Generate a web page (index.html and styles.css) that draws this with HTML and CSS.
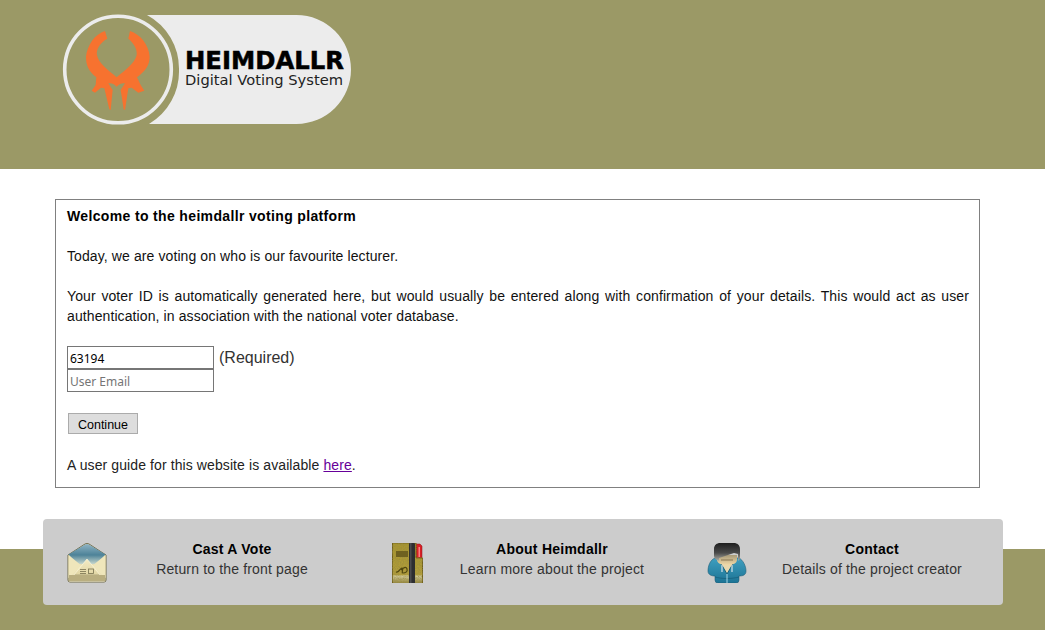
FILE: index.html
```html
<!DOCTYPE html>
<html lang="en">
<head>
<meta charset="utf-8">
<title>Heimdallr Digital Voting System</title>
<link rel="stylesheet" href="styles.css">
</head>
<body>
<header class="masthead">
  <svg class="logo" viewBox="62 14 292 112" width="292" height="112" role="img" aria-label="Heimdallr logo">
    <path d="M147 15H296.500A54.500 54.500 0 0 1 296.500 124H149A61 61 0 0 0 179 69.500A61 61 0 0 0 147 15Z" fill="#ececec"/>
    <circle cx="118" cy="69.500" r="53.300" fill="none" stroke="#ececec" stroke-width="3.600"/>
    <g transform="translate(75 20) scale(.3333)">
      <path fill="#f7722f" d="M90 33L97 56C75 68 63 88 66 105C70 130 100 150 125 172C150 150 180 130 185 105C188 88 175 68 160 56L165 33C195 42 222 75 224 110C224 135 212 152 186 172L197 195L208 212L190 218L170 203L160 205L150 270L146 268L137 210L150 190C140 188 130 194 125 200C120 194 110 188 100 190L113 210L107 270L103 268L88 205L78 203L60 218L50 212L62 195L64 172C40 152 33 135 33 110C37 75 60 42 90 33Z"/>
    </g>
    <text class="logo-title" x="185" y="69" textLength="159" lengthAdjust="spacingAndGlyphs">HEIMDALLR</text>
    <text class="logo-sub" x="185" y="85" textLength="158" lengthAdjust="spacingAndGlyphs">Digital Voting System</text>
  </svg>
</header>

<main class="content">
  <section class="welcome">
    <p class="para"><strong>Welcome to the heimdallr voting platform</strong></p>
    <p class="para">Today, we are voting on who is our favourite lecturer.</p>
    <p class="para">Your voter ID is automatically generated here, but would usually be entered along with confirmation of your details. This would act as user authentication, in association with the national voter database.</p>
    <form class="voter-form">
      <div class="field-row">
        <div class="field-stack">
          <input class="field" type="text" value="63194">
          <input class="field" type="text" placeholder="User Email">
        </div>
        <span class="required">(Required)</span>
      </div>
      <button class="continue" type="button">Continue</button>
    </form>
    <p class="guide">A user guide for this website is available <a class="guide-link" href="#">here</a>.</p>
  </section>
</main>

<footer class="band">
  <nav class="panel">
    <a class="item" href="#">
      <svg class="icon" viewBox="0 0 40 40" width="40" height="40" aria-hidden="true">
        <defs>
          <linearGradient id="flap" x1="0" y1="0" x2="0" y2="1"><stop offset="0" stop-color="#8fb4c4"/><stop offset=".55" stop-color="#4d8298"/><stop offset="1" stop-color="#c6d6cc"/></linearGradient>
          <linearGradient id="env" x1="0" y1="0" x2="0" y2="1"><stop offset="0" stop-color="#f3ebc4"/><stop offset=".68" stop-color="#e2d7a6"/><stop offset=".7" stop-color="#c9bf92"/><stop offset="1" stop-color="#b0a578"/></linearGradient>
        </defs>
        <path d="M1 12L18 1Q20 0 22 1L39 12V37Q39 39 37 39H3Q1 39 1 37Z" fill="#e9dfb2" stroke="#6f6a4a"/>
        <path d="M1.500 11.500L18 1.500Q20 .5 22 1.500L38.500 11.500L30 21H10Z" fill="url(#flap)"/>
        <path d="M1.500 12L15 23L1.500 35ZM38.500 12L25 23L38.500 35Z" fill="#efe6bb"/>
        <path d="M2 38L20 16L38 38Z" fill="url(#env)" stroke="#fbf6dc" stroke-width=".7"/>
        <path d="M2 38H38V32H2Z" fill="#b9ae80"/>
        <path d="M13 26.500h6M13 28.500h6M13 30.500h6" stroke="#77704f" stroke-width=".8"/>
        <rect x="21.500" y="26" width="5" height="4.500" fill="none" stroke="#77704f" stroke-width=".8"/>
      </svg>
      <span class="item-text"><strong class="item-title">Cast A Vote</strong><span class="item-desc">Return to the front page</span></span>
    </a>
    <a class="item" href="#">
      <svg class="icon" viewBox="0 0 40 40" width="40" height="40" aria-hidden="true">
        <defs>
          <linearGradient id="cover" x1="0" y1="0" x2="0" y2="1"><stop offset="0" stop-color="#a8952f"/><stop offset=".78" stop-color="#b39f3c"/><stop offset=".8" stop-color="#d3cb98"/><stop offset="1" stop-color="#8d7d34"/></linearGradient>
          <filter id="grain" x="0" y="0" width="100%" height="100%">
            <feTurbulence type="fractalNoise" baseFrequency=".9" numOctaves="2" seed="3" result="n"/>
            <feColorMatrix in="n" type="matrix" values="0 0 0 0 .3  0 0 0 0 .25  0 0 0 0 .05  1.400 0 0 0 -.45" result="d"/>
            <feComposite in="d" in2="SourceGraphic" operator="in" result="g"/>
            <feMerge><feMergeNode in="SourceGraphic"/><feMergeNode in="g"/></feMerge>
          </filter>
        </defs>
        <path d="M29 1H33L35 3V16H29Z" fill="#d81f26" stroke="#8e1116" stroke-width=".5"/>
        <rect x="31.500" y="4" width="1.500" height="10" fill="#ff8080"/>
        <path d="M5.500 0H29V15H35.500V41H5.500Z" fill="url(#cover)" stroke="#6f5f1a" filter="url(#grain)"/>
        <rect x="9" y="8" width="12" height="6" fill="#6e6020"/>
        <path d="M9 29c3 1 4-4 6-4s-1 5 1 5 5-1 4-4-4-1-6 1" fill="none" stroke="#51470f" stroke-width="1.200"/>
        <rect x="22" y="0" width="6" height="41" rx="1" fill="#2e2e30"/>
        <rect x="23" y="0" width="1.500" height="41" fill="#4b4b4e"/>
      </svg>
      <span class="item-text"><strong class="item-title">About Heimdallr</strong><span class="item-desc">Learn more about the project</span></span>
    </a>
    <a class="item" href="#">
      <svg class="icon" viewBox="0 0 40 40" width="40" height="40" aria-hidden="true">
        <defs>
          <linearGradient id="hood" x1="0" y1="0" x2="0" y2="1"><stop offset="0" stop-color="#3f9fc0"/><stop offset="1" stop-color="#1c7394"/></linearGradient>
          <linearGradient id="hair" x1="0" y1="0" x2="0" y2="1"><stop offset="0" stop-color="#1e1e1e"/><stop offset=".55" stop-color="#4a4a4a"/><stop offset="1" stop-color="#b0b0a8"/></linearGradient>
          <linearGradient id="face" x1="0" y1="0" x2="0" y2="1"><stop offset="0" stop-color="#a89a78"/><stop offset="1" stop-color="#f0d9a8"/></linearGradient>
        </defs>
        <path d="M8 15C3 17 1 23 1 28C1 32 5 33 8 33V37Q8 40 11 40H29Q32 40 32 37V33C36 33 39 32 39 28C39 23 36 17 32 15Z" fill="url(#hood)" stroke="#1c5e78" stroke-width=".6"/>
        <path d="M8 34C15 36 25 36 32 34" fill="none" stroke="#15607c" stroke-width=".8"/>
        <path d="M13 19H27L20 31Z" fill="#e8d8ae"/>
        <path d="M20 31V40" stroke="#b6e2ee" stroke-width=".9"/>
        <path d="M13 19L20 31L27 19" fill="none" stroke="#17607c" stroke-width="1"/>
        <path d="M15 22V29M25 22V29" stroke="#f4f4f4" stroke-width="1"/>
        <path d="M10 12H30V17C30 20 26 22 20 22C14 22 10 20 10 17Z" fill="url(#face)"/>
        <path d="M14 17H26" stroke="#6c5a3a" stroke-width=".7"/>
        <path d="M7 13V6C7 2 10 0 13 0H27C30 0 33 2 33 6V14C33 16 32 17 31 18V11L27 10L12 15V18C9 17 7 15 7 13Z" fill="url(#hair)"/>
      </svg>
      <span class="item-text"><strong class="item-title">Contact</strong><span class="item-desc">Details of the project creator</span></span>
    </a>
  </nav>
</footer>
</body>
</html>
```
FILE: styles.css
```css
* { box-sizing: border-box; }

html, body { margin: 0; padding: 0; }

body {
  background: #fff;
  color: #333;
  font-family: "Liberation Sans", Arial, sans-serif;
  font-size: 14px;
  line-height: 20px;
  overflow: hidden;
}

.masthead {
  height: 169px;
  background: #9b9966;
  padding: 14px 0 0 62px;
}

.logo { display: block; }

.logo-title {
  font-family: "DejaVu Sans", sans-serif;
  font-size: 24px;
  font-weight: 700;
  fill: #000;
  stroke: #000;
  stroke-width: .5px;
}

.logo-sub {
  font-family: "DejaVu Sans", sans-serif;
  font-size: 14px;
  fill: #222;
}

.content { padding: 30px 65px 61px 55px; }

.welcome {
  height: 289px;
  border: 1px solid #808080;
  padding: 6px 10px 0 11px;
  letter-spacing: .1px;
}

.para {
  margin: 0 0 20px;
  text-align: justify;
  color: #111;
}

.para strong {
  color: #000;
  letter-spacing: .35px;
}

.voter-form {
  display: flex;
  flex-direction: column;
  align-items: flex-start;
  margin-top: 20px;
}

.field-row {
  display: flex;
  gap: 5px;
  align-items: flex-start;
}

.field-stack {
  display: flex;
  flex-direction: column;
  width: 147px;
}

.field {
  width: 147px;
  height: 23px;
  margin: 0;
  padding: 2px 2px 0;
  border: 1px solid #767676;
  border-radius: 0;
  background: #fff;
  color: #000;
  font-family: "Noto Sans", sans-serif;
  font-size: 12px;
  letter-spacing: 0;
  outline: 0;
}

.field::placeholder { color: #757575; opacity: 1; }

.required {
  margin-top: 1px;
  color: #333;
  font-size: 16px;
  line-height: 22px;
  letter-spacing: 0;
}

.continue {
  width: 70px;
  height: 21px;
  margin: 21px 0 0 1px;
  padding: 2px 0 0;
  border: 1px solid #ababab;
  border-radius: 0;
  background: #ddd;
  color: #000;
  font-family: "Liberation Sans", Arial, sans-serif;
  font-size: 12.500px;
}

.guide { margin: 21px 0 0; color: #222; }

.guide-link { color: #660099; }

.band {
  height: 81px;
  background: #9b9966;
}

.panel {
  position: relative;
  top: -30px;
  display: grid;
  grid-template-columns: repeat(3, 320px);
  width: 960px;
  height: 86px;
  margin-left: 43px;
  padding-top: 20px;
  border-radius: 4px;
  background: #ccc;
}

.item {
  display: flex;
  align-items: flex-start;
  padding-left: 24px;
  color: #333;
  text-decoration: none;
}

.icon {
  flex: none;
  margin-top: 4px;
}

.item-text {
  display: flex;
  flex-direction: column;
  width: 250px;
  text-align: center;
  letter-spacing: .16px;
}

.item-title {
  color: #000;
  letter-spacing: .25px;
}
```
